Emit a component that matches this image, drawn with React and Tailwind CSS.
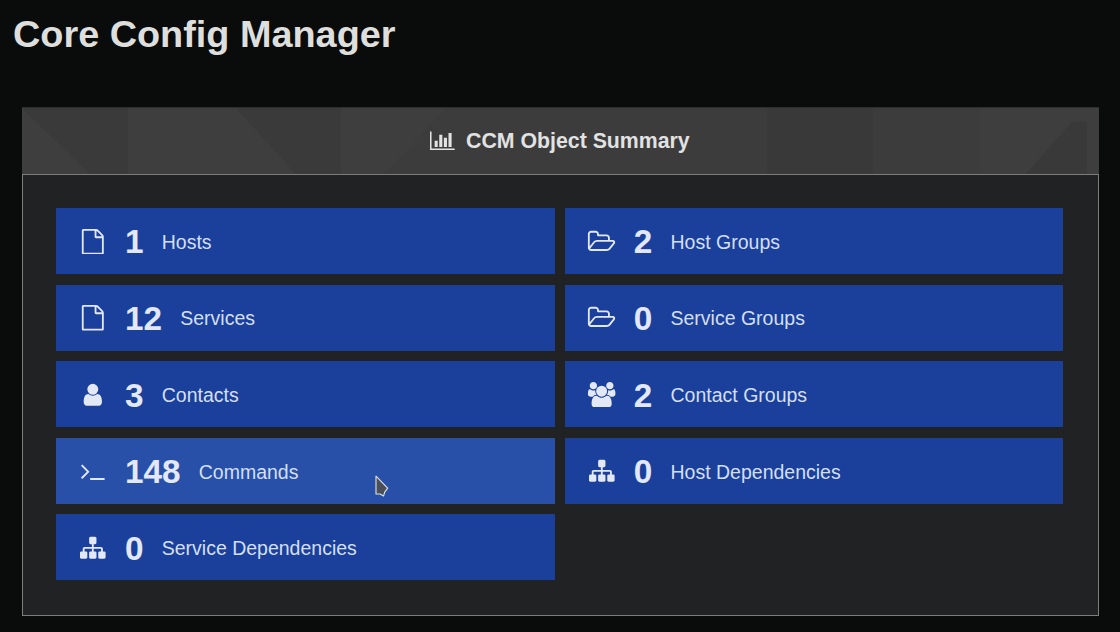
const PATHS = {
  chart: [2048, "M640 896v512h-256v-512h256zm384-512v1024h-256v-1024h256zm1024 1152v128h-2048v-1536h128v1408h1920zm-640-896v768h-256v-768h256zm384-384v1152h-256v-1152h256z"],
  file: [1792, "M1596 380q28 28 48 76t20 88v1152q0 40-28 68t-68 28h-1344q-40 0-68-28t-28-68v-1600q0-40 28-68t68-28h896q40 0 88 20t76 48zm-444-244v376h376q-10-29-22-41l-313-313q-12-12-41-22zm384 1528v-1024h-416q-40 0-68-28t-28-68v-416h-768v1536h1280z"],
  folder: [2048, "M1845 931q0-35-53-35h-1088q-40 0-85.5 21.5t-71.5 52.5l-294 363q-18 24-18 40 0 35 53 35h1088q40 0 86-22t71-53l294-363q18-22 18-39zm-1141-163h768v-160q0-40-28-68t-68-28h-576q-40 0-68-28t-28-68v-64q0-40-28-68t-68-28h-320q-40 0-68 28t-28 68v853l256-315q44-53 116-87.5t140-34.5zm1269 163q0 62-46 120l-295 363q-43 53-116 87.5t-140 34.5h-1088q-92 0-158-66t-66-158v-960q0-92 66-158t158-66h320q92 0 158 66t66 158v32h544q92 0 158 66t66 158v160h192q54 0 99 24.5t67 70.5q15 32 15 68z"],
  user: [1792, "M1536 1399q0 109-62.5 187t-150.5 78h-854q-88 0-150.5-78t-62.5-187q0-85 8.5-160.5t31.5-152 58.5-131 94-89 134.5-34.5q131 128 313 128t313-128q76 0 134.5 34.5t94 89 58.5 131 31.5 152 8.5 160.5zm-256-887q0 159-112.5 271.5t-271.5 112.5-271.5-112.5-112.5-271.5 112.5-271.5 271.5-112.5 271.5 112.5 112.5 271.5z"],
  users: [2048, "M657 896q-162 5-265 128h-134q-82 0-138-40.5t-56-118.5q0-353 124-353 6 0 43.5 21t97.5 42.5 119 21.5q67 0 133-23-5 37-5 66 0 159 90 256zm1071 637q0 120-73 189.5t-194 69.5h-874q-121 0-194-69.5t-73-189.5q0-53 3.5-103.5t14-109 26.5-108.5 43-97.5 62-81 85.5-53.5 111.5-20q10 0 43 21.5t73 48 107 48 135 21.5 135-21.5 107-48 73-48 43-21.5q61 0 111.5 20t85.5 53.5 62 81 43 97.5 26.5 108.5 14 109 3.5 103.5zm-1024-1277q0 106-75 181t-181 75-181-75-75-181 75-181 181-75 181 75 75 181zm704 384q0 159-112.5 271.5t-271.5 112.5-271.5-112.5-112.5-271.5 112.5-271.5 271.5-112.5 271.5 112.5 112.5 271.5zm576 225q0 78-56 118.5t-138 40.5h-134q-103-123-265-128 90-97 90-256 0-29-5-66 66 23 133 23 59 0 119-21.5t97.5-42.5 43.5-21q124 0 124 353zm-128-609q0 106-75 181t-181 75-181-75-75-181 75-181 181-75 181 75 75 181z"],
  terminal: [1792, "M649 983l-466 466q-10 10-23 10t-23-10l-50-50q-10-10-10-23t10-23l393-393-393-393q-10-10-10-23t10-23l50-50q10-10 23-10t23 10l466 466q10 10 10 23t-10 23zm1079 457v64q0 14-9 23t-23 9h-960q-14 0-23-9t-9-23v-64q0-14 9-23t23-9h960q14 0 23 9t9 23z"],
  sitemap: [1792, "M1792 1248v320q0 40-28 68t-68 28h-320q-40 0-68-28t-28-68v-320q0-40 28-68t68-28h96v-192h-512v192h96q40 0 68 28t28 68v320q0 40-28 68t-68 28h-320q-40 0-68-28t-28-68v-320q0-40 28-68t68-28h96v-192h-512v192h96q40 0 68 28t28 68v320q0 40-28 68t-68 28h-320q-40 0-68-28t-28-68v-320q0-40 28-68t68-28h96v-192q0-52 38-90t90-38h512v-192h-96q-40 0-68-28t-28-68v-320q0-40 28-68t68-28h320q40 0 68 28t28 68v320q0 40-28 68t-68 28h-96v192h512q52 0 90 38t38 90v192h96q40 0 68 28t28 68z"],
};

function Icon({ name, className }) {
  const [width, d] = PATHS[name];
  return (
    <svg viewBox={`0 0 ${width} 1792`} className={className} fill="currentColor" aria-hidden="true">
      <path d={d} />
    </svg>
  );
}

const TILES = [
  { icon: "file", count: 1, label: "Hosts" },
  { icon: "folder", count: 2, label: "Host Groups" },
  { icon: "file", count: 12, label: "Services" },
  { icon: "folder", count: 0, label: "Service Groups" },
  { icon: "user", count: 3, label: "Contacts" },
  { icon: "users", count: 2, label: "Contact Groups" },
  { icon: "terminal", count: 148, label: "Commands", active: true },
  { icon: "sitemap", count: 0, label: "Host Dependencies" },
  { icon: "sitemap", count: 0, label: "Service Dependencies" },
];

function Tile({ icon, count, label, active }) {
  return (
    <a className={`relative flex h-[66px] items-center pt-[2px] pl-[22px] ${active ? "bg-[#2950a8]" : "bg-[#1b409c]"}`}>
      <span className="flex w-[30px] justify-center text-[#e2e8f6]">
        <Icon name={icon} className="mb-[1px] h-[25.6px] w-auto shrink-0" />
      </span>
      <span className="ml-[17px] text-[33.3px] leading-none font-bold text-[#e2e8f8]">{count}</span>
      <span className="ml-[18.2px] pt-[1px] text-[19.5px] leading-none text-[#d3dff5]">{label}</span>
      {active && (
        <svg className="absolute top-[37px] left-[319px] h-[23px] w-[14px]" viewBox="0 0 14 23" aria-hidden="true">
          <path d="M1 1.2V19H5L8.6 20.9L9.7 17.2L12.7 13.2Z" fill="#4b4f57" stroke="#dfe3ea" strokeWidth="1.1" strokeLinejoin="round" />
        </svg>
      )}
    </a>
  );
}

function HeaderTexture() {
  return (
    <svg className="absolute inset-0 h-full w-full" viewBox="0 0 1077 67" preserveAspectRatio="none" aria-hidden="true">
      <path d="M0 0H106V67H68Z" fill="#3a3a3a" />
      <path d="M214 0H319V67H274Z" fill="#3a3a3a" />
      <path d="M425 0H532V67H362Z" fill="#3c3c3c" />
      <path d="M532 0H745V67H532Z" fill="#3c3c3c" />
      <path d="M745 0H851V67H745Z" fill="#393939" />
      <path d="M851 0H958V67H851Z" fill="#3c3c3c" />
      <path d="M1050 14H1065V67H1004Z" fill="#393939" />
    </svg>
  );
}

export default function App() {
  return (
    <main className="h-[632px] w-[1120px] overflow-hidden bg-[#0a0c0b] font-['Liberation_Sans',sans-serif]">
      <h1 className="h-[107px] pt-[12px] pl-[13px] text-[37.85px] leading-[44px] font-bold text-[#dededc]">
        Core Config Manager
      </h1>
      <section className="ml-[22px] w-[1077px]">
        <header className="relative h-[67px] border-t border-[#2d2e2e] bg-[#3e3e3e]">
          <HeaderTexture />
          <div className="relative flex h-full items-center justify-center pr-[1.4px] text-[#e2e2e2]">
            <Icon name="chart" className="mr-[11.5px] h-[21.6px] w-auto" />
            <h2 className="pt-[2px] text-[21.3px] leading-none font-bold">CCM Object Summary</h2>
          </div>
        </header>
        <div className="h-[442px] border border-[#7c7e7b] bg-[#202224] px-[33px] pt-[33px]">
          <div className="grid grid-cols-[499px_498.4px] gap-x-[9.8px] gap-y-[10.6px]">
            {TILES.map((tile) => (
              <Tile key={tile.label} {...tile} />
            ))}
          </div>
        </div>
      </section>
    </main>
  );
}
